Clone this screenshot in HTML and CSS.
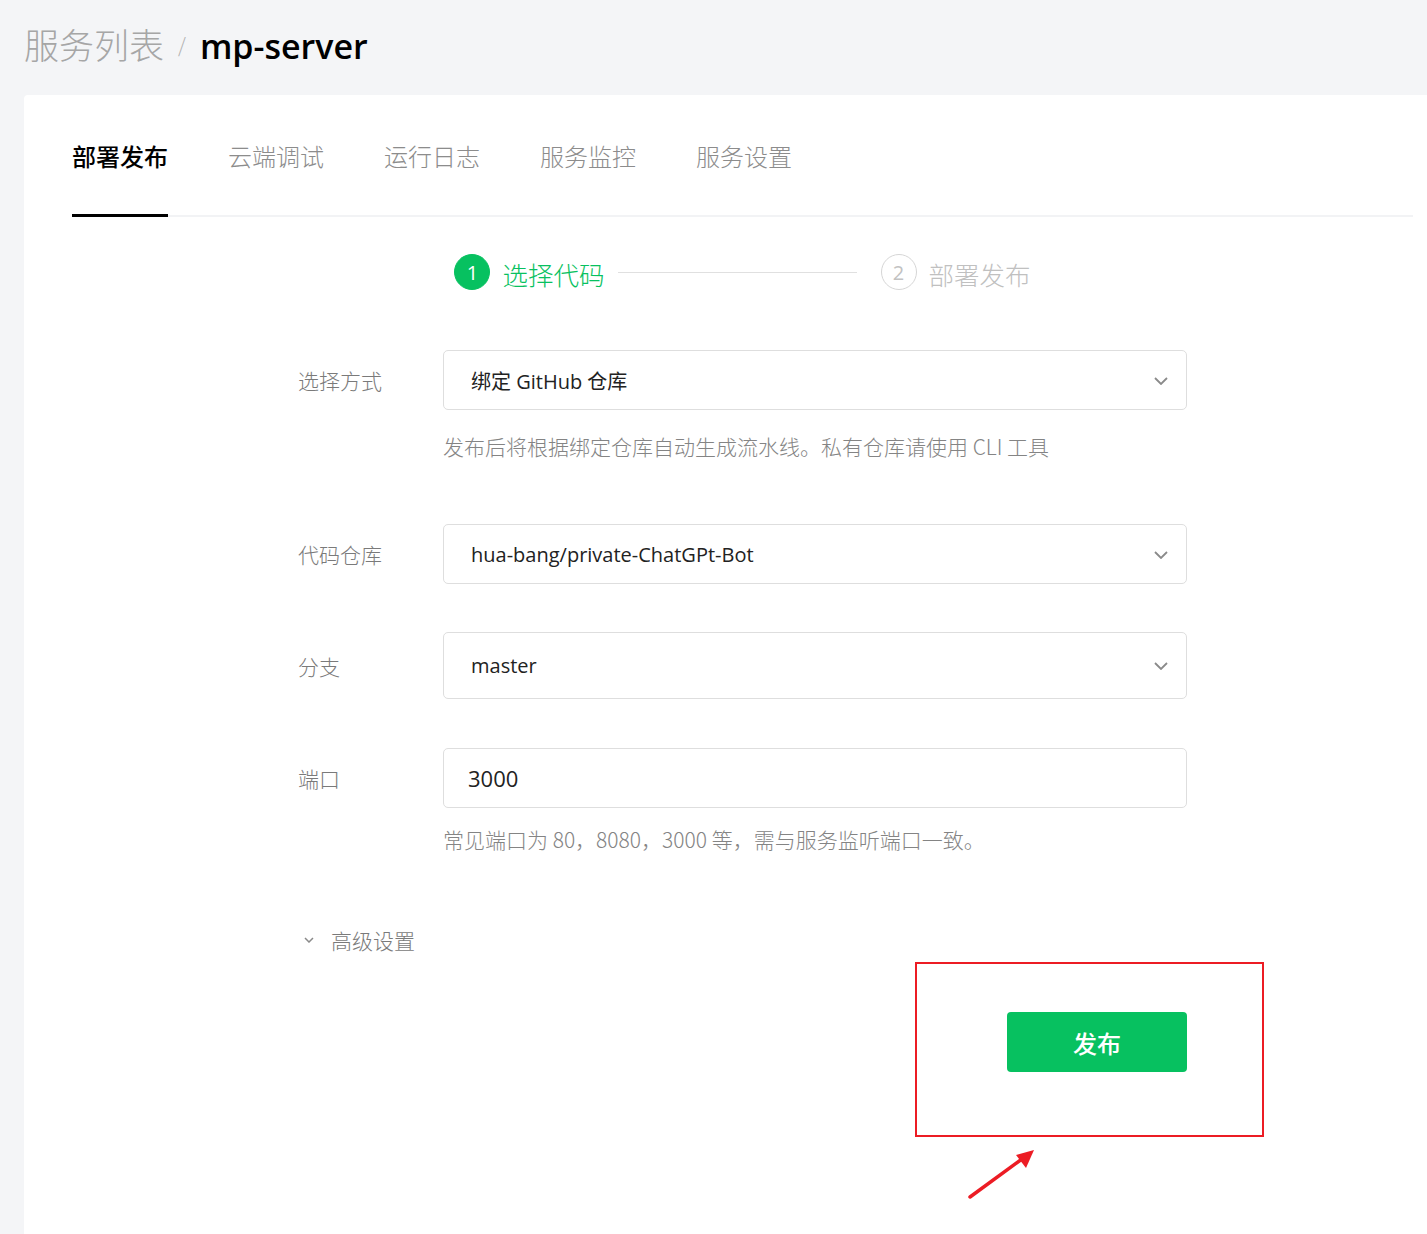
FILE: index.html
```html
<!DOCTYPE html>
<html lang="zh">
<head>
<meta charset="utf-8">
<title>mp-server</title>
<link rel="stylesheet" href="styles.css">
</head>
<body>
<header class="crumbs">
  <span class="crumb-parent">服务列表</span>
  <span class="crumb-sep">/</span>
  <span class="crumb-current">mp-server</span>
</header>
<main class="card">
  <nav class="tabs">
    <span class="tab active">部署发布</span>
    <span class="tab">云端调试</span>
    <span class="tab">运行日志</span>
    <span class="tab">服务监控</span>
    <span class="tab">服务设置</span>
  </nav>
  <section class="form">
    <div class="steps">
      <div class="step current"><span class="step-num">1</span><span class="step-text">选择代码</span></div>
      <div class="step-line"></div>
      <div class="step"><span class="step-num">2</span><span class="step-text">部署发布</span></div>
    </div>

    <div class="row row-1">
      <label class="label">选择方式</label>
      <div class="select">
        <span class="value">绑定 GitHub 仓库</span>
        <svg class="chev" width="14" height="8" viewBox="0 0 14 8"><path d="M1 1l6 6 6-6" fill="none" stroke="#8a8a8a" stroke-width="1.8"/></svg>
      </div>
    </div>
    <p class="help help-1">发布后将根据绑定仓库自动生成流水线。私有仓库请使用 CLI 工具</p>

    <div class="row row-2">
      <label class="label">代码仓库</label>
      <div class="select">
        <span class="value">hua-bang/private-ChatGPt-Bot</span>
        <svg class="chev" width="14" height="8" viewBox="0 0 14 8"><path d="M1 1l6 6 6-6" fill="none" stroke="#8a8a8a" stroke-width="1.8"/></svg>
      </div>
    </div>

    <div class="row row-3">
      <label class="label">分支</label>
      <div class="select tall">
        <span class="value">master</span>
        <svg class="chev" width="14" height="8" viewBox="0 0 14 8"><path d="M1 1l6 6 6-6" fill="none" stroke="#8a8a8a" stroke-width="1.8"/></svg>
      </div>
    </div>

    <div class="row row-4">
      <label class="label">端口</label>
      <div class="input"><span class="value num">3000</span></div>
    </div>
    <p class="help help-2">常见端口为 80，8080，3000 等，需与服务监听端口一致。</p>

    <div class="advanced">
      <svg class="adv-chev" width="10" height="6" viewBox="0 0 10 6"><path d="M1 1l4 4 4-4" fill="none" stroke="#8a8a8a" stroke-width="1.5"/></svg>
      <span>高级设置</span>
    </div>

    <div class="actions">
      <button class="publish">发布</button>
    </div>
  </section>
</main>
<div class="mark-box"></div>
<svg class="mark-arrow" width="80" height="60" viewBox="0 0 80 60">
  <line x1="4" y1="54" x2="56" y2="16" stroke="#ec1c24" stroke-width="3.5" stroke-linecap="round"/>
  <polygon points="68,7 50,12 60,25" fill="#ec1c24"/>
</svg>
</body>
</html>
```
FILE: styles.css
```css
* { box-sizing: border-box; }
html, body { margin: 0; padding: 0; }
body {
  background: #f4f5f7;
  font-family: "Open Sans", "Noto Sans CJK SC", sans-serif;
  color: #222;
  width: 1427px;
  height: 1234px;
  overflow: hidden;
  position: relative;
}
.crumbs {
  height: 95px;
  padding: 18px 0 0 24px;
  display: flex;
  align-items: baseline;
  font-family: "Noto Sans CJK SC", sans-serif;
}
.crumb-parent {
  font-size: 35px;
  color: #a6a6a6;
  font-weight: 300;
}
.crumb-sep {
  font-size: 20px;
  color: #b0b0b0;
  font-weight: 300;
  margin: 0 14px 0 14px;
  position: relative;
  top: -6px;
}
.crumb-current {
  font-family: "Open Sans", "Noto Sans CJK SC", sans-serif;
  font-size: 34px;
  font-weight: 600;
  color: #000;
}
.card {
  margin-left: 24px;
  background: #fff;
  border-top-left-radius: 4px;
  height: 1139px;
}
.tabs {
  display: flex;
  gap: 60px;
  margin: 0 14px 0 48px;
  border-bottom: 2px solid #f2f3f5;
  padding-top: 40px;
  font-family: "Noto Sans CJK SC", sans-serif;
}
.tab {
  font-size: 24px;
  line-height: 42px;
  height: 80px;
  width: 96px;
  color: #8c8c8c;
  font-weight: 300;
  position: relative;
}
.tab.active {
  color: #000;
  font-weight: 500;
}
.tab.active::after {
  content: "";
  position: absolute;
  left: 0; right: 0; bottom: -2px;
  height: 3px;
  background: #000;
}
.form {
  margin-left: 274px;
  width: 889px;
  font-family: "Open Sans", "Noto Sans CJK SC", sans-serif;
}
.steps {
  display: flex;
  align-items: center;
  justify-content: center;
  margin-top: 37px;
  height: 36px;
}
.step {
  display: flex;
  align-items: center;
  gap: 12px;
  font-family: "Noto Sans CJK SC", sans-serif;
}
.step-num {
  width: 36px; height: 36px;
  border-radius: 50%;
  border: 1.5px solid #d6d6d6;
  color: #c2c2c2;
  display: flex; align-items: center; justify-content: center;
  font-family: "Open Sans", sans-serif;
  font-size: 20px;
}
.step-text {
  font-size: 25.5px;
  color: #c0c0c0;
  font-weight: 300;
  line-height: 36px;
  margin-top: 3px;
}
.step.current .step-num {
  background: #07c160;
  border-color: #07c160;
  color: #fff;
}
.step.current .step-text { color: #07c160; }
.step-line {
  width: 239px;
  height: 1px;
  background: #e0e0e0;
  margin: 0 24px 0 13px;
}
.row {
  display: flex;
  align-items: center;
}
.row-1 { margin-top: 60px; }
.row-2 { margin-top: 63px; }
.row-3 { margin-top: 48px; }
.row-4 { margin-top: 49px; }
.label {
  width: 145px;
  font-family: "Noto Sans CJK SC", sans-serif;
  font-size: 21px;
  font-weight: 300;
  color: #7a7a7a;
}
.select, .input {
  width: 744px;
  height: 60px;
  border: 1px solid #dedede;
  border-radius: 5px;
  display: flex;
  align-items: center;
  justify-content: space-between;
  padding: 0 18px 0 27px;
}
.select.tall { height: 67px; }
.input { padding-left: 24px; }
.value {
  font-size: 20px;
  color: #222;
}
.value.num { font-size: 22px; }
.chev { margin-top: 1px; }
.help {
  margin: 0 0 0 145px;
  font-family: "Noto Sans CJK SC", sans-serif;
  font-size: 21px;
  font-weight: 300;
  color: #848484;
  line-height: 30px;
}
.help-1 { margin-top: 21px; }
.help-2 { margin-top: 16px; }
.advanced {
  margin-top: 71px;
  display: flex;
  align-items: center;
  gap: 17px;
  padding-left: 6px;
  font-family: "Noto Sans CJK SC", sans-serif;
  font-size: 21px;
  font-weight: 300;
  color: #7a7a7a;
}
.actions {
  display: flex;
  justify-content: flex-end;
  margin-top: 57px;
}
.publish {
  width: 180px;
  height: 60px;
  border: none;
  border-radius: 4px;
  background: #07c160;
  color: #fff;
  font-family: "Noto Sans CJK SC", sans-serif;
  font-size: 24px;
  font-weight: 500;
}
.mark-box {
  position: absolute;
  left: 915px;
  top: 962px;
  width: 349px;
  height: 175px;
  border: 2px solid #ec1c24;
}
.mark-arrow {
  position: absolute;
  left: 966px;
  top: 1143px;
}
```
